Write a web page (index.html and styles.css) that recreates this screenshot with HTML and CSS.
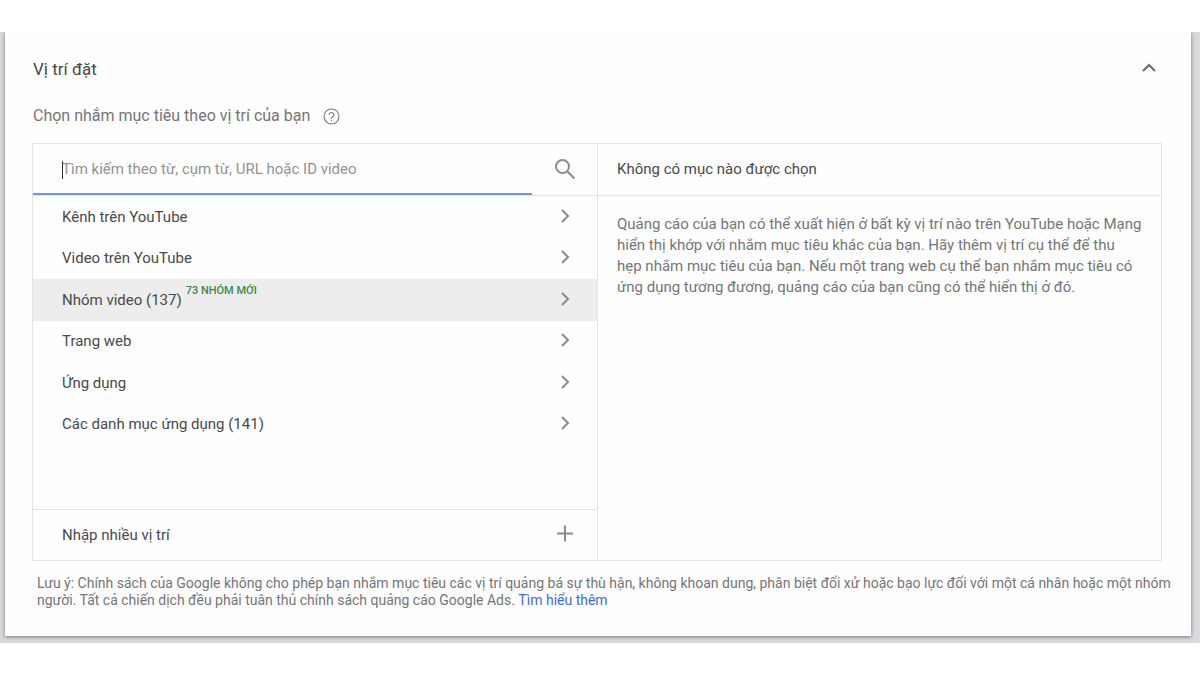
FILE: index.html
```html
<!DOCTYPE html>
<html lang="vi">
<head>
<meta charset="utf-8">
<meta name="viewport" content="width=device-width, initial-scale=1">
<title>Vị trí đặt</title>
<link rel="stylesheet" href="styles.css">
</head>
<body>
<main class="stage">
  <section class="card">
    <header class="card-header">
      <h1 class="title">Vị trí đặt</h1>
      <button class="icon-button" type="button" aria-label="Thu gọn">
        <svg class="icon icon-dark" viewBox="0 0 24 24"><path d="M5 14 11 8l6 6"/></svg>
      </button>
    </header>
    <div class="subtitle">
      <label for="search">Chọn nhắm mục tiêu theo vị trí của bạn</label>
      <button class="icon-button" type="button" aria-label="Trợ giúp">
        <svg class="icon-help" viewBox="0 0 16 16"><circle cx="8" cy="8" r="7"/><path d="M5.800 6.500a2.200 2.200 0 1 1 3.400 1.800C8.400 8.800 8 9.100 8 10"/><path d="M8 11.200v1.300"/></svg>
      </button>
    </div>
    <div class="picker">
      <div class="browse">
        <div class="search">
          <div class="field">
            <span class="caret"></span>
            <input class="search-input" id="search" type="text" placeholder="Tìm kiếm theo từ, cụm từ, URL hoặc ID video">
          </div>
          <button class="icon-button search-button" type="button" aria-label="Tìm kiếm">
            <svg class="icon" viewBox="0 0 24 24"><circle cx="9.500" cy="8.500" r="6.500"/><path d="m14.200 13.200 7.300 7.300"/></svg>
          </button>
        </div>
        <div class="options">
          <button class="row" type="button"><span>Kênh trên YouTube</span><svg class="icon" viewBox="0 0 24 24"><path d="m9 5 6 6-6 6"/></svg></button>
          <button class="row" type="button"><span>Video trên YouTube</span><svg class="icon" viewBox="0 0 24 24"><path d="m9 5 6 6-6 6"/></svg></button>
          <button class="row row-active" type="button"><span>Nhóm video (137)<sup class="badge">73 NHÓM MỚI</sup></span><svg class="icon" viewBox="0 0 24 24"><path d="m9 5 6 6-6 6"/></svg></button>
          <button class="row" type="button"><span>Trang web</span><svg class="icon" viewBox="0 0 24 24"><path d="m9 5 6 6-6 6"/></svg></button>
          <button class="row" type="button"><span>Ứng dụng</span><svg class="icon" viewBox="0 0 24 24"><path d="m9 5 6 6-6 6"/></svg></button>
          <button class="row" type="button"><span>Các danh mục ứng dụng (141)</span><svg class="icon" viewBox="0 0 24 24"><path d="m9 5 6 6-6 6"/></svg></button>
        </div>
        <button class="row row-bulk" type="button"><span>Nhập nhiều vị trí</span><svg class="icon" viewBox="0 0 24 24"><path d="M12 2.500v16M4 10.500h16"/></svg></button>
      </div>
      <div class="selection">
        <h2 class="selection-title">Không có mục nào được chọn</h2>
        <p class="selection-text">Quảng cáo của bạn có thể xuất hiện ở bất kỳ vị trí nào trên YouTube hoặc Mạng hiển thị khớp với nhắm mục tiêu khác của bạn. Hãy thêm vị trí cụ thể để thu hẹp nhắm mục tiêu của bạn. Nếu một trang web cụ thể bạn nhắm mục tiêu có ứng dụng tương đương, quảng cáo của bạn cũng có thể hiển thị ở đó.</p>
      </div>
    </div>
    <p class="note">Lưu ý: Chính sách của Google không cho phép bạn nhắm mục tiêu các vị trí quảng bá sự thù hận, không khoan dung, phân biệt đối xử hoặc bạo lực đối với một cá nhân hoặc một nhóm người. Tất cả chiến dịch đều phải tuân thủ chính sách quảng cáo Google Ads. <a class="link" href="#">Tìm hiểu thêm</a></p>
  </section>
</main>
</body>
</html>
```
FILE: styles.css
```css
* {
  box-sizing: border-box;
}

body {
  margin: 0;
  padding: 32px 0;
  background: #fff;
  color: #48494b;
  font-family: Roboto, "Noto Sans", sans-serif;
  font-size: 15px;
  line-height: 20px;
}

h1, h2, p {
  margin: 0;
  font-weight: 400;
}

button, input {
  font: inherit;
  color: inherit;
  border: 0;
  padding: 0;
  background: none;
}

.stage {
  padding: 0 9px 7px 5px;
  background: #d8dade;
  overflow: hidden;
}

.card {
  padding: 25px 15px 27px 27px;
  background: #fefefe;
  box-shadow: 0 1px 4px #77797c;
  clip-path: inset(0 -9px -7px -5px);
}

.card-header {
  display: flex;
  align-items: center;
  justify-content: space-between;
  padding: 0 14px 0 1px;
}

.title {
  font-size: 17px;
  line-height: 24px;
}

.icon-button {
  display: flex;
  align-items: center;
  justify-content: center;
}

.icon {
  flex: none;
  width: 24px;
  height: 24px;
  fill: none;
  stroke: #8b8b8b;
  stroke-width: 2;
}

.icon-dark {
  stroke: #686868;
}

.icon-help {
  width: 17px;
  height: 17px;
  fill: none;
  stroke: #77787a;
  stroke-width: 1;
}

.subtitle {
  display: flex;
  align-items: center;
  gap: 13px;
  padding: 25px 0 17px 1px;
  color: #747577;
  font-size: 16px;
}

.picker {
  display: grid;
  grid-template-columns: 1fr 1fr;
  margin-right: 14px;
  border: 1px solid #e3e3e3;
}

.browse {
  display: flex;
  flex-direction: column;
}

.search {
  display: flex;
  height: 52px;
  border-bottom: 1px solid #e3e3e3;
}

.field {
  position: relative;
  flex: 1;
  border-bottom: 2px solid #6f97e0;
}

.search-input {
  width: 100%;
  height: 100%;
  padding-left: 29px;
  outline: 0;
  caret-color: transparent;
}

.search-input::placeholder {
  color: #929292;
  opacity: 1;
}

.caret {
  position: absolute;
  top: 17px;
  left: 29px;
  width: 1px;
  height: 18px;
  background: #333;
}

.search-button {
  width: 65px;
}

.options {
  display: grid;
  grid-template-rows: repeat(6, 1fr);
  height: 249px;
}

.row {
  display: flex;
  align-items: center;
  justify-content: space-between;
  padding: 0 20px 0 29px;
  text-align: left;
}

.row-active {
  background: #ededed;
}

.badge {
  margin-left: 4px;
  color: #3d8a50;
  font-size: 11px;
  font-weight: 500;
  line-height: 0;
  vertical-align: 11px;
}

.row-bulk {
  height: 51px;
  margin-top: 64px;
  border-top: 1px solid #e3e3e3;
}

.selection {
  border-left: 1px solid #e3e3e3;
}

.selection-title {
  height: 52px;
  padding: 15px 19px;
  border-bottom: 1px solid #e3e3e3;
  font-size: 15px;
}

.selection-text {
  padding: 18px 19px 0;
  color: #747577;
  line-height: 21px;
}

.note {
  padding: 14px 0 0 5px;
  color: #747577;
  font-size: 14px;
  line-height: 17px;
}

.link {
  display: inline-block;
  color: #4169e1;
  text-decoration: none;
}
```
